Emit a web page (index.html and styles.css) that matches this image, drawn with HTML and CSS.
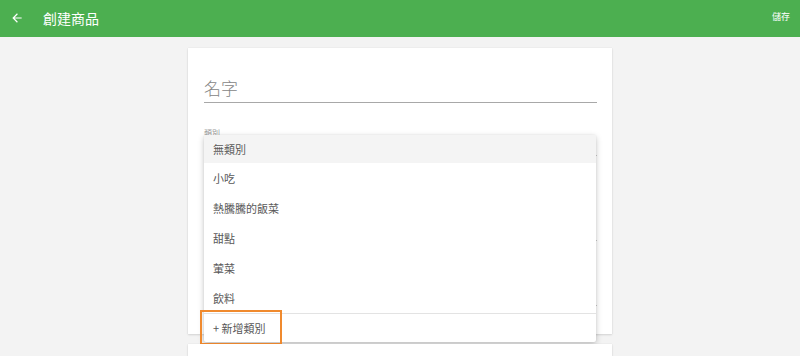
FILE: index.html
```html
<!DOCTYPE html>
<html lang="zh-Hant">
<head>
<meta charset="utf-8">
<link rel="stylesheet" href="styles.css">
</head>
<body>
<header class="appbar">
  <div class="appbar-left">
    <svg class="back" width="14" height="14" viewBox="0 0 24 24"><path d="M20 11H7.83l5.59-5.59L12 4l-8 8 8 8 1.41-1.41L7.83 13H20v-2z" fill="#fff"/></svg>
    <span class="title">創建商品</span>
  </div>
  <span class="save">儲存</span>
</header>
<main class="page">
  <section class="card">
    <div class="field name-field"><span class="placeholder">名字</span></div>
    <div class="field select-field"><span class="label">類別</span><div class="line"></div></div>
    <div class="field spacer-a"><div class="line"></div></div>
    <div class="field spacer-b"><div class="line"></div></div>
    <div class="menu">
      <ul class="menu-list">
        <li class="item selected">無類別</li>
        <li class="item">小吃</li>
        <li class="item">熱騰騰的飯菜</li>
        <li class="item">甜點</li>
        <li class="item">葷菜</li>
        <li class="item">飲料</li>
      </ul>
      <div class="add">+ 新增類別</div>
    </div>
    <div class="highlight"></div>
  </section>
  <section class="card card-next"></section>
</main>
</body>
</html>
```

FILE: styles.css
```css
* { box-sizing: border-box; }
html, body { margin: 0; padding: 0; }
body {
  width: 800px;
  height: 356px;
  overflow: hidden;
  background: #f3f3f3;
  font-family: "Noto Sans CJK TC", "Noto Sans", sans-serif;
}
.appbar {
  height: 37px;
  background: #4caf50;
  display: flex;
  align-items: center;
  justify-content: space-between;
  padding: 0 10px 0 10px;
  color: #fff;
}
.appbar-left { display: flex; align-items: center; }
.back { margin-right: 19px; margin-top: -1px; }
.title { font-size: 14px; line-height: 1; margin-top: -2px; }
.save { font-size: 9px; margin-top: -4px; }
.page {
  display: flex;
  flex-direction: column;
  align-items: center;
  padding-top: 11px;
  gap: 10px;
  height: 319px;
  overflow: hidden;
}
.card {
  position: relative;
  width: 424px;
  height: 286px;
  background: #fff;
  box-shadow: 0 1px 2px rgba(0,0,0,0.12), 0 0 1px rgba(0,0,0,0.1);
  padding: 0 15px 0 16px;
  flex-shrink: 0;
}
.card-next { height: 12px; }
.field { position: relative; }
.name-field {
  height: 55px;
  padding-top: 28px;
  border-bottom: 1px solid #a8a8a8;
}
.placeholder { font-size: 17px; color: #858585; line-height: 20px; font-weight: 300; }
.select-field { height: 53px; padding-top: 25px; }
.label { display: block; font-size: 8px; color: #9a9a9a; line-height: 10px; }
.line { position: absolute; left: 0; right: 0; bottom: 0; height: 1px; background: #c8c8c8; }
.spacer-a { height: 85px; }
.spacer-b { height: 65px; }
.menu {
  position: absolute;
  left: 16px;
  top: 87px;
  width: 392px;
  background: #fff;
  box-shadow: 0 2px 6px rgba(0,0,0,0.22), 0 0 2px rgba(0,0,0,0.08);
  border-radius: 2px;
}
.menu-list { list-style: none; margin: 0; padding: 0; }
.item {
  height: 30px;
  line-height: 30px;
  padding-left: 9px;
  font-size: 11px;
  color: #585858;
}
.item.selected { background: #f4f4f4; height: 28px; line-height: 28px; }
.add {
  border-top: 1px solid #e3e3e3;
  height: 29px;
  line-height: 28px;
  padding-left: 9px;
  font-size: 11px;
  color: #585858;
}
.highlight {
  position: absolute;
  left: 12px;
  top: 262px;
  width: 82px;
  height: 35px;
  border: 2.5px solid #f08a2e;
}
```
